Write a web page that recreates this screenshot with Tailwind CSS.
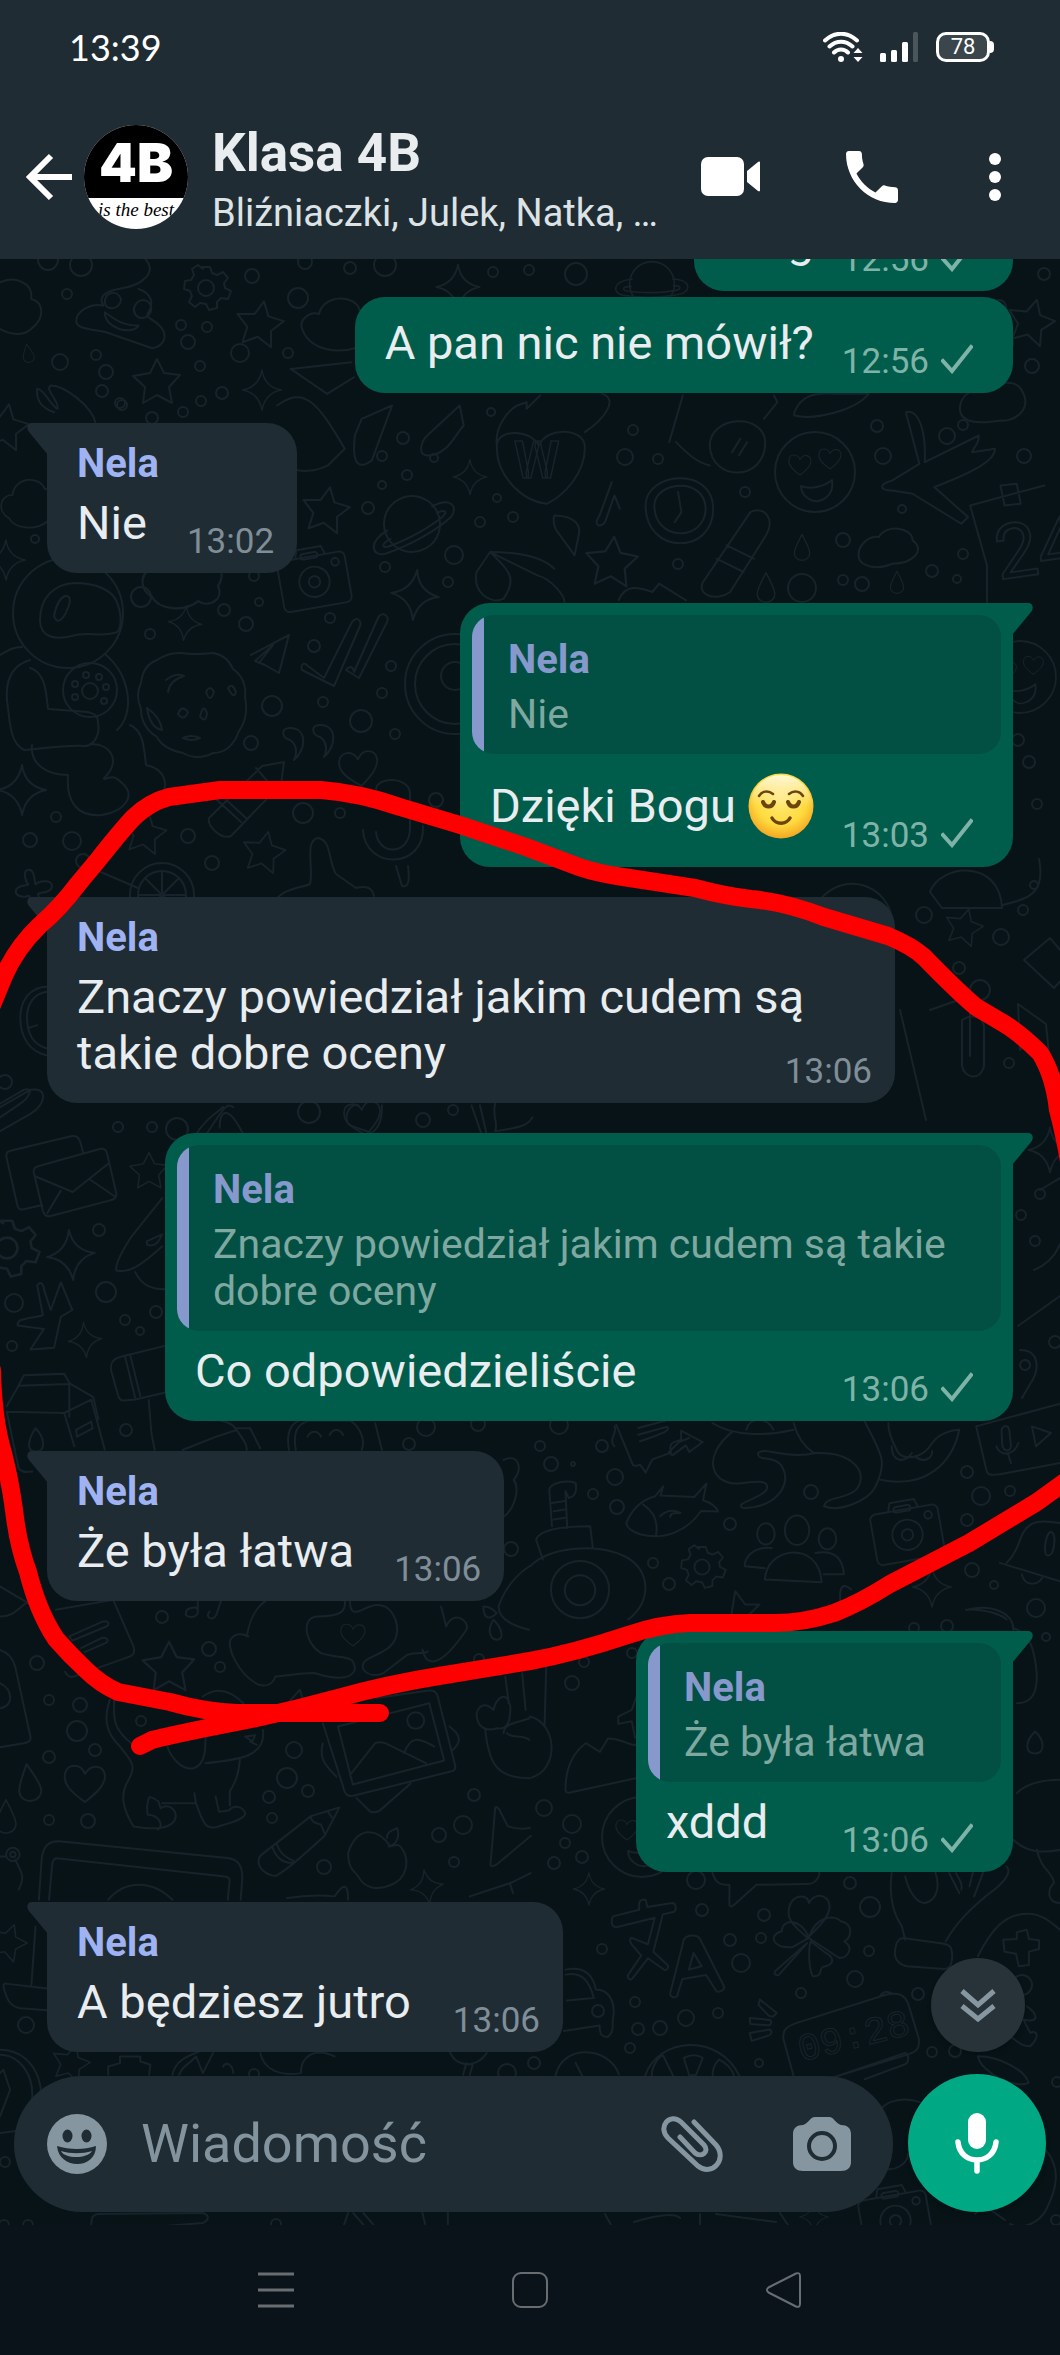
<!DOCTYPE html>
<html lang="pl">
<head>
<meta charset="utf-8">
<meta name="viewport" content="width=device-width, initial-scale=1">
<title>Klasa 4B</title>
<script src="https://cdn.jsdelivr.net/npm/@tailwindcss/browser@4"></script>
</head>
<body class="bg-[#0a131a] font-[Roboto,sans-serif] text-[#e9edef]">
<svg class="hidden" aria-hidden="true">
  <defs>
    <symbol id="check" viewBox="0 0 32 30"><path d="M2 17l9 10L30 3" fill="none" stroke="#80b3a8" stroke-width="4" stroke-linecap="square"/></symbol>
    <symbol id="tail-in" viewBox="0 0 21 32"><path d="M21 0H5C0 0-1 5 2 9l19 23z" fill="#1f2c34"/></symbol>
    <symbol id="tail-out" viewBox="0 0 21 32"><path d="M0 0h16c5 0 6 5 3 9L0 32z" fill="#005d4b"/></symbol>
  </defs>
</svg>
<div class="flex min-h-screen flex-col">
  <header class="relative z-10 bg-[#1f2c34]">
    <div class="flex h-[94px] items-center justify-between pl-[69px] pr-[66px]">
      <time class="font-[Lato,sans-serif] text-[36px] leading-10 text-white">13:39</time>
      <div class="flex items-center gap-[17px]">
        <svg class="h-[30px] w-[40px]" viewBox="0 0 40 30" fill="none" stroke="#fff" stroke-width="4" stroke-linecap="round">
          <path d="M2 8.500C12-.5 24-.5 34 8.500M6.500 14.500c7-6.500 16-6.500 23 0M11 20.500c4-4 10-4 14 0"/>
          <circle cx="18" cy="27" r="3" fill="#fff" stroke="none"/>
          <path d="M35 16l4.500 5h-9zM35 30l4.500-5h-9z" fill="#fff" stroke="none"/>
        </svg>
        <svg class="h-[30px] w-[39px]" viewBox="0 0 39 30" fill="#fff">
          <rect y="21" width="6" height="9" rx="1.500"/><rect x="11" y="18" width="6" height="12" rx="1.500"/><rect x="22" y="10" width="6" height="20" rx="1.500"/><rect x="33" width="5" height="30" rx="1.500" opacity=".2"/>
        </svg>
        <div class="flex items-center">
          <span class="flex h-[30px] w-[54px] items-center justify-center rounded-[10px] border-3 border-white bg-[#3a454c] text-[22px] leading-6 text-white">78</span>
          <span class="h-3 w-1 rounded-r bg-white"></span>
        </div>
      </div>
    </div>
    <div class="flex h-[165px] items-center pl-[24px] pr-[46px]">
      <button class="mr-[10px]" aria-label="Wstecz">
        <svg class="h-[50px] w-[50px]" viewBox="0 0 50 50" fill="none" stroke="#fff" stroke-width="6"><path d="M48 25H7M27 4L6 25l21 21"/></svg>
      </button>
      <div class="flex size-[104px] shrink-0 flex-col items-center overflow-hidden rounded-full bg-white text-center">
        <div class="h-[73px] w-full shrink-0 bg-black pt-[10px] font-[Inter,sans-serif] text-[54px] leading-[56px] font-black text-white">4B</div>
        <div class="font-[Liberation_Serif,serif] text-[19px] leading-6 whitespace-nowrap text-black italic">is the best</div>
      </div>
      <div class="ml-[24px] w-[450px] min-w-0 pt-2">
        <h1 class="truncate text-[53px] leading-[64px] font-bold">Klasa 4B</h1>
        <p class="truncate text-[38px] leading-[56px] text-[#dde2e5]">Bliźniaczki, Julek, Natka, …</p>
      </div>
      <div class="ml-auto flex items-center">
        <button class="mr-[86px]" aria-label="Połączenie wideo">
          <svg class="h-[40px] w-[59px]" viewBox="0 0 59 40" fill="#fff"><rect width="43" height="39" rx="7"/><path d="M59 5.500v28c0 1-1 1-2 .5L46 25V14L57 5c1-1 2-.5 2 .5z"/></svg>
        </button>
        <button class="mr-[90px]" aria-label="Połączenie głosowe">
          <svg class="size-[52px]" viewBox="3 3 18 18" fill="#fff"><path d="M6.620 10.790c1.440 2.830 3.760 5.140 6.590 6.590l2.200-2.200c.27-.27.67-.36 1.020-.24 1.120.37 2.330.57 3.570.57.55 0 1 .45 1 1V20c0 .55-.45 1-1 1-9.390 0-17-7.610-17-17 0-.55.45-1 1-1h3.500c.55 0 1 .45 1 1 0 1.250.2 2.450.57 3.570.11.35.03.74-.25 1.020z"/></svg>
        </button>
        <button class="mr-[12px]" aria-label="Menu">
          <svg class="h-[50px] w-[14px]" viewBox="0 0 14 50" fill="#fff"><circle cx="7" cy="7" r="6"/><circle cx="7" cy="25" r="6"/><circle cx="7" cy="43" r="6"/></svg>
        </button>
      </div>
    </div>
  </header>

  <main class="relative flex flex-1 flex-col overflow-hidden bg-[#081317]">
    <!-- Doodle wallpaper -->
    <svg class="absolute inset-0 h-full w-full" viewBox="0 259 1060 1966" preserveAspectRatio="xMidYMin slice" fill="none" stroke="#17232a" stroke-width="2" stroke-linejoin="round" stroke-linecap="round" aria-hidden="true">
      <defs>
        <path id="star" d="M0-23l7 14 16 2-11 12 3 16L0 13l-14 8 2-16-12-11 17-3z"/>
        <path id="spark" d="M0-25Q3-4 24 0 4 4 0 25-4 4-24 0-4-4 0-25z"/>
        <path id="heart" d="M0 20C-14 10-22 2-20-8-18-19-4-19 0-8 6-19 19-17 20-6 20 4 10 12 0 20z"/>
        <path id="drop" d="M0-18C6-6 11 2 11 9a11 10 0 0 1-22 0C-11 2-6-6 0-18z"/>
        <g id="planet"><circle r="28"/><path d="M-25-6C-50-4-50 12-36 14-10 18 20 17 38 12 50 6 46-6 26-6M-26 3C-38 3-38 8-30 9-10 12 15 11 30 8 38 6 36 2 27 2"/></g>
        <g id="gear"><circle r="8"/><path d="M-4-21h8l2 6 5 2 6-3 5 6-4 5 1 5 6 3-3 8-7-1-4 4 0 6-8 2-3-6-6-1-5 4-6-5 3-6-2-5-6-2 1-8 6-1 3-5-2-6 6-4 5 4z"/></g>
        <g id="cam"><rect x="-36" y="-24" width="72" height="54" rx="6"/><path d="M-16-24l3-9h26l3 9"/><circle cy="3" r="16"/><circle cy="3" r="6"/><circle cx="25" cy="-14" r="4"/><rect x="-10" y="-28" width="18" height="6" rx="3"/></g>
        <g id="love"><circle r="40"/><use href="#heart" transform="translate(-15 -8) scale(.55)"/><use href="#heart" transform="translate(15 -14) scale(.55)"/><path d="M-14 14C-4 18 10 14 17 8 20 24 4 34-6 27-11 24-14 20-14 14z"/></g>
        <path id="cloud" d="M-30 18C-44 10-40-8-26-8-24-28 4-30 10-14 26-22 40-6 30 8 36 22 20 28 12 22 0 32-24 30-30 18z"/>
      </defs>
      <g id="bubbles"></g>
      <g id="repeats"></g>
      <!-- upper left: space and cookie -->
      <g>
        <circle cx="68" cy="613" r="55"/><path d="M40 620c0-22 14-36 34-37 20 0 40 6 44 22 4 12 4 28-4 28-14 4-28-2-42 3-16 4-32 2-32-16zM54 616c2-10 6-18 11-20 6-1 6 6 2 14-3 8-10 16-13 6z"/>
        <path d="M30 660c-20 6-26 24-22 48 2 20 4 36 16 42 12 0 40-6 62-4 10-2 14-14 12-22 0-10-4-10-10-12l-40-3c-2-16-2-36-18-41M0 655c10-6 14-8 22-8M105 654c26 22 30 60 12 76M32 745c-2 20 16 30 36 30M68 775c-2 28 10 42 34 40 24-4 34-20 20-32-8-8-10-6-18-4M104 778c16-14 10-34-14-34M130 725c14 6 14 24 16 40 20 4 22 20 16 30"/>
        <circle cx="90" cy="690" r="27"/><circle cx="90" cy="691" r="8"/><circle cx="86" cy="675" r="3"/><circle cx="99" cy="677" r="3"/><circle cx="106" cy="687" r="3"/><circle cx="104" cy="701" r="3"/><circle cx="75" cy="697" r="3"/><circle cx="75" cy="684" r="3"/>
        <path d="M157 660q12-8 24-7 14 2 32 0 14 2 20 16 14 10 12 28 4 20-6 34-8 22-26 22-16 8-30 0-20-4-26-16-16-10-16-28-6-14 0-26 2-18 16-23zM166 680q10-8 18-4-14 4-16 16M206 692q4-8 8 0-4 12-8 0zM178 714q4-10 10-2-4 10-10 2zM200 716q4-14 7-2-2 10-7 2zM228 688q4-6 8 4-2 8-8-4zM147 708q14 10 15 22-12-2-15-22zM183 738q8-4 17 0-8 4-17 0z"/>
        <path d="M251 655l38-20-10 38-14-8-10-4 18-16-14 18M302 670c-2-6 2-8 6-4l16 12 28-56c4-6 10-2 8 4l-26 60zM346 670c4-6 8-2 8 2l24-54c4-8 12-2 9 4l-28 56z"/>
        <path d="M290 740c-8-2-10-12 0-12 18 0 16 22 4 32 4-8 2-16-4-20zM320 737c-8-2-10-12 0-12 18 0 16 22 4 32 4-8 2-16-4-20zM209 818c-2 8 12 22 22 18l50-52 3-22-22 4zM256 768l14 16M217 800l24 22M222 796l24 22"/>
        <circle cx="455" cy="684" r="50"/><circle cx="455" cy="684" r="40"/><circle cx="455" cy="676" r="14"/>
        <path d="M276 900c8-12 26-12 34-16 4-14-6-44 8-46 14 2 10 24 18 36l20 14c8-2 16-2 18 8M363 830c2 40 62 40 60-4M376 832c2 24 34 24 34-4M376 790c0-14 34-14 34 4v36M396 866l6 20c6 2 8-4 6-20"/>
        <circle cx="162" cy="895" r="32"/><circle cx="162" cy="895" r="24"/><path d="M162 871v48M138 895h48M145 878l34 34M179 878l-34 34M96 870l42 18"/>
        <path d="M28 870c8-2 6 16 8 14s16-6 16 2-14 6-14 8 6 14-2 14-4-14-8-12-14 0-12-6 14-4 12-6-6-14 0-14z"/>
      </g>
      <!-- top strip -->
      <g transform="translate(0 259) scale(.676 .333)">
        <path vector-effect="non-scaling-stroke" d="M215 0c18 40-4 80-40 90-20 8-30 24-22 50-20-10-42 20-40 50 2 20 20 20 44 30l68 48c20-6 24-44 10-70-10-20-20-20-16-36 10-30 4-60-14-72M155 130c0-30 18-40 24-10 0 30-22 40-24 10zM198 150c4-36 24-36 26 0-2 36-26 36-26 0zM155 160c20 30 30 40 50 40-10 30-50 10-50-40zM0 70c20-20 50 0 46 50 20 10 20 60 0 90-10 20-30 20-46 0M530 265c-30 20-70 10-82-50-8-30 10-60 24-50 6-60 56-60 60-10M55 390c10 0 20 50 30 60 4-20-20-60-10-70 20 0 60 60 66 110M55 390c-2 40 10 60 25 70M430 330l90-20M430 330l54 75 40-50M410 440c40-60 60-10 100 130l-25 50c-20 20-40 20-50 10M525 530l10-50 45-40-30 165c-20 30-30 10-25-75zM680 440l-48 90c-10 20-14 60 0 60 30 0 40-60 54-90z"/>
        <path vector-effect="non-scaling-stroke" d="M735 560c0-50 50-50 62 0 14-60 66-50 68 0 2 80-30 150-56 175-40-10-76-90-74-175zM735 560c-4-60 20-110 30-120l14-10 0 20 20-40M865 520c30-40 50-100 26-115M955 740c0-100 100-120 100 10 0 140-100 140-100-10zM968 740c0-70 74-90 76 10-2 100-76 100-76-10zM1003 700l5 60-10 30M1050 560c0-90 80-100 82-10 0 120-80 120-82 10zM990 550l20-140M1000 550c20 40 30 60 50 70M1130 480l20-50-5-20M1175 460c10-50 30-60 60-55l50 0c-20 50-80 80-110 65zM1340 460c20-10 30 60 28 150l50-50 30-30c0 30-10 40-10 50l34-10c0 30-20 60-90 115l50 90-10 20-72-90-30-10c-20 0-20-20 0-30l40-50zM1420 450c0-40 20-70 40-50 10-30 40-40 50-10 20 60-10 100-30 95-30 10-60 10-60-35zM1270 890c0-40 20-60 30-55 10-40 50-30 50 10 20 30 0 70-30 70-20 20-50 10-50-25zM820 770c30 0 40 30 36 60l-6 60-25-70c-8-20-6-50-5-50zM1040 970l70-210c20-20 40 20 20 80l-50 160c-20 30-50 10-40-30zM1060 900l40 40M1075 860l40 40M705 940l20-60c50 0 80 20 95 50M705 940c-6 60 20 100 40 80 20-60 10-80-20-140l70 70c20 10 40 60 40 80M915 1025c10-50 30-40 50-25l10-25 40 50M1435 740l110-60M1435 740l25 180 0 110M1480 680l24-5 6 60-24 5zM905 670l-18 100c-10 30 0 40 8 20l14-80 8 40M1095 540l-12 40M1105 550l-12 40"/>
      </g>
      <text x="514" y="478" font-size="52" font-weight="700" stroke-width="1.500">W</text>
      <text x="996" y="578" font-size="76" transform="rotate(-8 1010 560)">24</text>
      <!-- right margin -->
      <g>
        <path d="M930 892c10-28 70-34 72 16l-60 0zM1003 905c18-6 44-6 36-46M820 900a40 40 0 0 1 72 20M1024 960l26-22 24 28-20 22zM930 1010l40-14v60M962 1020c10-6 20-4 22 6v40c-4 16-20 12-22 0zM1018 1004l2 46 14-14 16 28-4-40zM900 1010l26 110M1040 1190l20-12M1034 1270c20-8 24-22 26-26M1018 1326l42-30M1020 1350c20 0 20 20 10 34l-8 14M1025 1360a5 5 0 1 0 .1 0"/>
        <circle cx="1034" cy="885" r="4"/>
      </g>
      <!-- left column -->
      <g transform="translate(0 880) scale(.338 .344)">
        <path vector-effect="non-scaling-stroke" d="M0 690l60-40c30-20 40-50 10-40L0 650M0 730l90-50c50-30 50-80 0-70L0 660M60 400c0-50 30-90 80-90M80 400c0-40 20-70 60-75M60 400c0 60 30 100 80 110M80 400c0 50 20 80 60 90M85 430l25-8M20 810c-4-20 0-20 20-25l170-40c16-4 24 4 28 18l8 30M20 810l30 130c4 20 10 20 30 15l45-10M100 850c-2-12 4-16 20-20l175-48c14-4 20 4 22 14l26 110c4 14 0 22-20 26l-170 44c-14 4-22 0-26-14zM105 862l110 45 105-82M140 968l40-65M265 870l75 50M480 925l-90 110c-20 30-50 80-46 100 40 10 80-20 136-70M435 1050l45-20c-10 20-20 40-45 30zM400 1140c20 40 50 50 90 50M110 1180c10-20 20 0 20 10l20 60 30-80 34 80-34 20 -20 90-70 5 40-60-78-10c0-20 10-15 75-30zM330 1430c-8-30 10-40 30-45l125-30M330 1430l20 70c6 20 20 12 50 10l90-20M370 1385l30 120M385 1380l30 120M55 1470l15-30 120-5 16 28 70 40 15 65M55 1470l150-5M55 1470l-35 60M205 1465l0 95"/>
        <path vector-effect="non-scaling-stroke" d="M580 740c30-50 60-60 80-80M610 740c60-90 60-90 80-80M650 720c0-60 30-60 70 20M1060 655c-30-10-50 50-20 60l60 20c30-20 30-60 30-80M1395 655l30 85M1420 655l20 85M1465 650c-10 40 10 50 0 80 80-10 100-20 110-40"/>
      </g>
      <!-- lower left -->
      <g transform="translate(0 1400) scale(.338 .333)">
        <path vector-effect="non-scaling-stroke" d="M20 35l35 170c6 12 20 12 40 10M20 35l170 4 30 100M190 39l80-40 40 150M105 85c-20 30-30 70 0 70s30-40 0-70zM225 90l45-25 4 20-46 25zM440 0l8 100 10 50M540 150l100-40 60-20c20 30 30 40 30 60M700 90c-10-20-40-30-70-30M700 85l40 0 30 60M855 150c-10-60 10-80 30-88M875 150c-10-60 10-80 40-88h120c20 10 50 50 35 88M910 110c10-20 30-20 40 0M975 105c10-20 30-20 40 0M1110 70l20 80M1490 180c40-20 60 20 30 60 20 30 0 90-30 110M100 620l-100-60M0 650c40 0 50-20 100-60M165 630l170-30 60 140c4 20 0 25-10 30l-165 60c-10 4-20 0-28-14M205 710l100-45c16-4 22 10 8 16l-100 42zM240 745l60-30c16-4 26 10 10 16l-60 26M550 640c0-20 40-20 35-10M585 600l0 40c-10 20-40 10-35 0M655 600l-15 45c-10 20-35 10-20-10M730 710c10-60 30-90 60-110M1020 600c4 30-4 50-80 50-50 0-40 80 10 110 60 20 100 0 100 50-10 30-60 30-120 10-60 0-80 10-115 10-10 30-30 30-50 25-60-30-100-120-80-140 20-20 40-10 50-5M1035 600c0 60 30 30 60 20 60-20 80 40 80 70 0 60-60 70-90 90-30 20 0 60 50 40l70-55c30-10 50 0 60-10M1250 750c10 50 50 60 130-60 10-30-40-60-60-10l-15-60M1475 620c20-60 60-100 90-120M1475 620c0 40 50 60 90 70M1430 620c20 0 30 10 40 20-20 20-40 20-40-20zM1460 660c-20 30-10 60 10 60s20-30-10-60z"/>
      </g>
      <g transform="translate(0 1600) scale(.338 .333)">
        <path vector-effect="non-scaling-stroke" d="M0 150c30 10 40 30 45 50l45 210c2 14-4 16-20 20l-70 12M0 250c40 20 40 70 0 75M325 300c-20 60-10 100 30 140 40 50 50 60 20 110-20 40-10 80 20 130 60 10 120 10 125-30 0-20-20-40-45-25l-6-20c-30-20-30-20-34 20l2 20c30 0 50 30 30 45M338 300c-4 60 0 90 50 130M480 610l100 0-5-30M580 610c20 60 30 80 60 72 30-10 80-20 86-40-6-20-30-30-50-10l-28 4-10-46M710 475c-4 60-20 80-30 100l0 42M600 290c40-30 80-20 120 20M495 440c10 30 40 70 75 66 50-10 35-100 38-120M608 490c100-10 180-20 170-100M725 410l30-4-8 18zM740 425l20 10M847 315l40-45 10 30M955 370l60 190c6 26 14 30 30 28l285-72c18-4 20-10 14-30l-50-200c-6-16-20-16-40-12l-140 20M1000 380l270-70 44 172-270 72zM1040 520l70-90c10-4 20-4 30 0l120 60M1195 460c20-50 40-50 90-20M955 430c-10 40 0 60 40 100M1330 380c40 30 30 50 10 70M1055 595l40 40c10 4 20 4 30-4l90-80M765 785c0 20 20 40 50 44 40-20 100-80 145-120l44-86-84 26-145 115c-8 6-10 12-10 21zM920 650c0 20 20 20 30 25l10 25M805 740c10 30 30 50 60 50M820 735c10 30 30 40 50 50M970 635l12 18M1155 740c-40-60-100-60-125 20 0 50 20 55 30 70 20 40 60 40 90 28 60-20 60-80 40-110-10-20-20-10-35-8zM1145 715c0-20 10-20 30-30 10 30-5 50-25 55M1465 625c0-6 6-4 12 4l25 50c20 8 40 10 66 6M1465 625l-14 170c2 8 10 4 20-2l100-85M1410 340c10-30 30-30 50-10 10-40 40-60 50-10 0 50-10 70-40 65-30 10-60 0-60-45zM1435 385c10 100 30 150 130 150M1490 400c0-30 40-30 76-45M1500 400c20 20 40 0 66 20M1495 230l10 80M1545 220l10 110M115 900l8-120c4-40 20-60 60-55l490 50c30 4 44 20 44 60l-5 65M145 900l10-110c2-10 8-16 20-14l490 54c12 2 16 6 14 16l-5 54M320 900c50-60 130-60 190 0M0 770l16 0M45 780c20 40 30 50 10 90M850 895c60-10 100-10 140-5 20-30 40-50 40 10M1390 890l120-40 60-30M1508 850l10 30"/>
        <circle vector-effect="non-scaling-stroke" cx="1230" cy="362" r="25"/><circle vector-effect="non-scaling-stroke" cx="38" cy="764" r="20"/><circle vector-effect="non-scaling-stroke" cx="38" cy="764" r="8"/>
      </g>
      <g transform="translate(0 1860) scale(.338 .333)">
        <path vector-effect="non-scaling-stroke" d="M105 200l-12 175M10 380c0-10 4-10 14-8l115 14M10 380c10 40 20 60 50 65l80 6M0 570c120 0 160 160 80 240l-80 10M0 585c90 0 130 140 60 200M0 640l10-10 20 60-30 80M320 645v-25l35-10v-20l60 0 0 15 30 10-4 30M510 645c10-50 60-60 80-70M530 645c10-30 30-30 50-55l20 50 30-60M660 620c10-20 30 0 30 20M770 580c10 50 60 70 120 60 0-50 40-80 100-50M1330 575c20 50 80 50 110 5M1380 610l-10 35M1400 610l-10 35M270 1095c0-20 4-30 20-32l310-3c20 6 20 20 0 30l-180 15M1030 1060l-12 35M1045 1060l30 35M1075 1060l30 35M1250 1060l8 35M1325 1060v35"/>
      </g>
      <!-- right: animals, people, gadgets -->
      <g transform="translate(530 1120) scale(.338 .333)">
        <path vector-effect="non-scaling-stroke" d="M255 915l45 110c4 16 12 16 26 10l16 24 20-40 55-20c-10-40 20-30 30-40l0-26 64 34-40 30-10-20-40 30-10-10 30-30 30-12M320 925l80-22M320 945l85-24c10 10 0 16-80 44M540 910c60 40 160 40 240 20M600 935c-100 80-60 170 30 155 40-5 80-10 70 20-20 30-100 40-70 55 100 0 140-70 120-115-20-50-80-20-75-50 20-20 80 20 170 0 110-5 160 60 120 110-30 30-90 20-95 50 50 20 130-20 150-55 40-80 20-100-30-200M780 910c10 40 30 70 60 90M1060 910c0 40 20 70 30 90 20 20 70 20 100-30 20-30 60-40 80-40-20 100-100 180-235 150M1320 920l30 130c4 20 16 16 40 14l178-34M1320 920l248-68M1395 930c10-20 24-10 24 10l4 40c-4 20-24 14-26-6zM1380 980c10 30 50 30 65-10M1415 1005l8 25M1485 920l56 20-44 40zM285 1210c20-50 50-70 85-80l24-30-8 28 100 4 36-40-10 50c30 10 40 20 44 34l-50-2c-40 60-110 90-180 70-30-10-40-20-41-34zM335 1155c30 20 45 50 38 90M385 1190c20-20 40-20 60-10-20 0-30 0-30 12M65 1220l-8-110c4-20 50-30 78-20 4 20 0 40-20 45l-10-20 5 110M65 1150l38-6M70 1175l38-6M70 1200l38-6M18 1260c10-30 80-40 160-40l8 65M18 1260l20 60M0 1340c60-60 200-70 280-30 80 40 80 140 10 190M635 1340c0-30 30-60 80-55M635 1340l60 6M695 1380c4-100 160-120 168 8zM845 1300c60-10 80 20 84 64l-60 0M595 1490l12-75 30 40 42 0-40 40M920 1460c-6-40-4-80 30-50M1410 1330c20-20 30-40 40-70 20-60 60-60 118-50M1390 1330l178 55M1455 1365c10 40 50 30 60 10M1525 1270c10-60 40-30 20 30-20 20-24 0-20-30zM250 980c-20-20 10-40 0-60M1300 1470c60 0 100 20 110 30M640 930c10-40 60-40 80 0M1070 980c0 50 40 50 60 20M1140 1010c20 20 50 10 50-15"/>
        <circle vector-effect="non-scaling-stroke" cx="148" cy="1410" r="86"/><circle vector-effect="non-scaling-stroke" cx="148" cy="1412" r="45"/><ellipse vector-effect="non-scaling-stroke" cx="790" cy="1232" rx="36" ry="44"/><ellipse vector-effect="non-scaling-stroke" cx="698" cy="1243" rx="26" ry="32"/><ellipse vector-effect="non-scaling-stroke" cx="880" cy="1258" rx="26" ry="32"/>
      </g>
      <g transform="translate(530 1600) scale(.338 .333)">
        <path vector-effect="non-scaling-stroke" d="M48 200l-5 180M0 350c80 20 90 160 0 185M105 570c0-60 20-110 60-140l42 26 24-40c40 0 60 20 84 20M105 570c0 8 6 10 14 8l200-44M315 290l-14 40-40 20 0 22 40-8 10 50M540 820c10 30 20 36 50 36v60c4 8 10 4 20-6l60-55 150-2c20 0 36-16 36-35M1070 820c-10 80 10 130 30 160l10 40M1110 830c10 40 30 80 60 80 40-10 40-60 30-90M1240 820l30 60M1260 820c10 20 20 30 16 50M1310 820l-10 40M1410 800c20 20-20 60-50 80-60 50-100 90-130 145M1340 820l-26 70M1085 1030c10-20 20-14 40-12l100 14c20 4 24 14 24 40-2 30-10 36-24 36l-110-8c-40-10-40-40-30-70zM1325 1070c40-80 80-130 150-128 40 0 70 30 95 50M1400 1020l40-2 0-20 30-8 6 28 30 4 0 26-30 8 0 40-30 4-8-38-34-6zM1440 580c30-30 80-40 130-40M1430 720c40 40 90 40 140 30M1500 750c10 60 50 70 50 100-20 20-20 60 18 60M1290 30c80-20 140 10 140 60M1440 310c60 0 70-60 50-150-10-50-40-70-60-75M1494 395c-30 30-30 66 0 66s30-40 0-66zM765 940c0-60 60-60 60-30 20-40 70-20 60 20-6 30-40 60-64 85-20-20-56-45-56-75zM825 1015c-20-60-80-60-80-20-40 10-30 50 30 48zM825 1015c20-70 80-70 95-50 40 10 30 50 10 60 30 20 10 50-15 50zM830 1025c-10 40 0 110 10 105 30 0 10-30 35-30 30-10 20-30 0-40zM820 1030l-95 85c-4 10 4 14 12 10zM245 950c-8 20 0 36 14 32l110-28-20 80-50-20c-8 10 0 20 10 30l20 24-40 60c0 10 8 16 14 8l46-60 50 36c8 0 12-10 8-16l-42-40 28-112 34-8c8-8 4-26-6-26l-74 12-4-20c-8-6-20 0-20 10l0 18zM415 1180l40-160c10-16 40-16 48-2l72 144c0 10-16 18-24 12l-30-48-70 12-16 52c-10 8-22 0-20-10zM470 1110l14-50 24 40zM105 1110c50-10 80 10 90 60 40 0 60 40 50 90 0 30 0 40-15 52-20 0-24-10-24-34l-106 16M105 1125c50-10 70 20 84 70l-80 8M75 1430c20-100 160-90 188-5M135 1390l20 40M340 1430c40-120 220-130 280 0M360 1430c0-30 20-60 34-62l30 62M455 1375c20-10 40-10 56 0l-20 52-20 0zM540 1430c0-30 10-40 20-50 20 10 40 30 44 50M680 1200l50 40c-8 10-12 14-24 8l-30-32zM650 1255l60 6c6 8 4 16-4 16l-54-4zM650 1300l60-10c8 6 4 16-4 18l-50 16zM780 1430l-30-110c-4-30 10-40 40-50l260-84c40-10 60 0 70 30l30 100c4 30-4 40-36 50l-230 72M880 1440l230-80c16 10 8 30 0 34l-120 45M1035 1190c10-16 20-16 36-8M1325 1370c60 0 140 40 150 80-40 20-140-30-150-80zM1470 1220c40 30 30 50-10 40l20 40c20-10 30 10 0 40-20 0-20 0-60-30"/>
      </g>
      <text x="797" y="2049" font-family="Liberation Mono" font-size="38" stroke-width="1" transform="rotate(-14 850 2038)">09:28</text>
      <path d="M880 2110c10-14 40-14 50 0M884 2168c10 4 24-4 24-14M1046 2150c16 20 10 40 0 60-8 14-24 20-36 14M634 2222c20-6 40-10 46-4M716 2214l60 8M700 2214v11M605 2214l6 11M780 2213l8 12M975 2214l10-8 20 14"/>
    </svg>

    <section class="relative z-10 -mt-16 flex flex-1 flex-col items-start px-[47px]" aria-label="Wiadomości">
      <article class="flex min-h-24 items-end self-end rounded-[30px] bg-[#005d4b] pt-[18px] pb-[11px] pl-5 pr-[40px]">
        <p class="mr-7 mb-[11px] text-[47px] leading-14">Omg</p>
        <time class="text-[35px] leading-10 text-[#80b3a8]">12:56</time>
        <svg class="ml-3 mb-2 h-[30px] w-[32px]"><use href="#check"/></svg>
      </article>

      <article class="mt-[6px] flex items-end self-end rounded-[30px] bg-[#005d4b] pt-[18px] pb-[11px] pl-[30px] pr-[40px]">
        <p class="mr-7 mb-[11px] text-[47px] leading-14">A pan nic nie mówił?</p>
        <time class="text-[35px] leading-10 text-[#80b3a8]">12:56</time>
        <svg class="ml-3 mb-2 h-[30px] w-[32px]"><use href="#check"/></svg>
      </article>

      <article class="relative mt-[30px] rounded-[30px] rounded-tl-none bg-[#1f2c34] pt-[17px] pb-[11px] pl-[30px] pr-[23px]">
        <svg class="absolute top-0 -left-5 h-8 w-[21px]"><use href="#tail-in"/></svg>
        <h2 class="text-[40px] leading-[47px] font-bold text-[#9fb3f3]">Nela</h2>
        <div class="mt-2 flex items-end justify-between">
          <p class="mr-10 mb-[11px] text-[47px] leading-14">Nie</p>
          <time class="text-[35px] leading-10 text-[#7f8e97]">13:02</time>
        </div>
      </article>

      <article class="relative mt-[30px] self-end rounded-[30px] rounded-tr-none bg-[#005d4b] p-3 pb-[11px]">
        <svg class="absolute top-0 -right-5 h-8 w-[21px]"><use href="#tail-out"/></svg>
        <blockquote class="flex overflow-hidden rounded-[22px] bg-[#025043]">
          <span class="w-3 shrink-0 bg-[#8799cc]"></span>
          <div class="pt-[21px] pr-10 pb-4 pl-6">
            <h2 class="text-[40px] leading-[47px] font-bold text-[#8799cc]">Nela</h2>
            <p class="mt-2 text-[41px] leading-[47px] text-[#7fa8a0]">Nie</p>
          </div>
        </blockquote>
        <div class="mt-[13px] flex items-end justify-between pl-[18px] pr-7">
          <p class="mr-7 mb-[11px] flex h-[78px] items-center text-[47px] leading-14">Dzięki Bogu
            <svg class="ml-3 size-[66px]" viewBox="0 0 66 66" role="img" aria-label="😌">
              <defs><radialGradient id="face" cx=".5" cy=".4" r=".6"><stop offset="0" stop-color="#ffe97d"/><stop offset=".65" stop-color="#fedb3e"/><stop offset="1" stop-color="#f5a623"/></radialGradient><linearGradient id="shine" x2="0" y2="1"><stop offset="0" stop-color="#fff7d6"/><stop offset=".5" stop-color="#fff7d6" stop-opacity="0"/></linearGradient></defs>
              <circle cx="33" cy="33" r="32.500" fill="url(#face)"/><circle cx="33" cy="33" r="31" fill="url(#shine)"/>
              <g fill="none" stroke="#6b4410" stroke-linecap="round"><path d="M11 23c3-5 9-6 14-2M41 21c5-4 11-3 14 2" stroke-width="2.500"/><path d="M15 29c2 6 9 6 11 0M40 29c2 6 9 6 11 0" stroke-width="4"/><path d="M24 45c4 7 14 7 18 0" stroke-width="3.500"/></g>
            </svg>
          </p>
          <div class="flex items-end">
            <time class="text-[35px] leading-10 text-[#80b3a8]">13:03</time>
            <svg class="ml-3 mb-2 h-[30px] w-[32px]"><use href="#check"/></svg>
          </div>
        </div>
      </article>

      <article class="relative mt-[30px] max-w-[848px] rounded-[30px] rounded-tl-none bg-[#1f2c34] pt-[17px] pb-[11px] pl-[30px] pr-[23px]">
        <svg class="absolute top-0 -left-5 h-8 w-[21px]"><use href="#tail-in"/></svg>
        <h2 class="text-[40px] leading-[47px] font-bold text-[#9fb3f3]">Nela</h2>
        <p class="mt-2 flow-root text-[47px] leading-14">Znaczy powiedział jakim cudem są takie dobre oceny<time class="float-right mt-[27px] text-[35px] leading-10 text-[#7f8e97]">13:06</time></p>
      </article>

      <article class="relative mt-[30px] max-w-[848px] self-end rounded-[30px] rounded-tr-none bg-[#005d4b] p-3 pb-[11px]">
        <svg class="absolute top-0 -right-5 h-8 w-[21px]"><use href="#tail-out"/></svg>
        <blockquote class="flex overflow-hidden rounded-[22px] bg-[#025043]">
          <span class="w-3 shrink-0 bg-[#8799cc]"></span>
          <div class="pt-[21px] pr-10 pb-4 pl-6">
            <h2 class="text-[40px] leading-[47px] font-bold text-[#8799cc]">Nela</h2>
            <p class="mt-2 text-[41px] leading-[47px] text-[#7fa8a0]">Znaczy powiedział jakim cudem są takie dobre oceny</p>
          </div>
        </blockquote>
        <div class="mt-3 flex items-end justify-between pl-[18px] pr-7">
          <p class="mr-7 mb-[11px] text-[47px] leading-14">Co odpowiedzieliście</p>
          <div class="flex items-end">
            <time class="text-[35px] leading-10 text-[#80b3a8]">13:06</time>
            <svg class="ml-3 mb-2 h-[30px] w-[32px]"><use href="#check"/></svg>
          </div>
        </div>
      </article>

      <article class="relative mt-[30px] rounded-[30px] rounded-tl-none bg-[#1f2c34] pt-[17px] pb-[11px] pl-[30px] pr-[23px]">
        <svg class="absolute top-0 -left-5 h-8 w-[21px]"><use href="#tail-in"/></svg>
        <h2 class="text-[40px] leading-[47px] font-bold text-[#9fb3f3]">Nela</h2>
        <div class="mt-2 flex items-end justify-between">
          <p class="mr-10 mb-[11px] text-[47px] leading-14">Że była łatwa</p>
          <time class="text-[35px] leading-10 text-[#7f8e97]">13:06</time>
        </div>
      </article>

      <article class="relative mt-[30px] min-w-[377px] self-end rounded-[30px] rounded-tr-none bg-[#005d4b] p-3 pb-[11px]">
        <svg class="absolute top-0 -right-5 h-8 w-[21px]"><use href="#tail-out"/></svg>
        <blockquote class="flex overflow-hidden rounded-[22px] bg-[#025043]">
          <span class="w-3 shrink-0 bg-[#8799cc]"></span>
          <div class="pt-[21px] pr-10 pb-4 pl-6">
            <h2 class="text-[40px] leading-[47px] font-bold text-[#8799cc]">Nela</h2>
            <p class="mt-2 text-[41px] leading-[47px] text-[#7fa8a0]">Że była łatwa</p>
          </div>
        </blockquote>
        <div class="mt-3 flex items-end justify-between pl-[18px] pr-7">
          <p class="mr-7 mb-[11px] text-[47px] leading-14">xddd</p>
          <div class="flex items-end">
            <time class="text-[35px] leading-10 text-[#80b3a8]">13:06</time>
            <svg class="ml-3 mb-2 h-[30px] w-[32px]"><use href="#check"/></svg>
          </div>
        </div>
      </article>

      <article class="relative mt-[30px] rounded-[30px] rounded-tl-none bg-[#1f2c34] pt-[17px] pb-[11px] pl-[30px] pr-[23px]">
        <svg class="absolute top-0 -left-5 h-8 w-[21px]"><use href="#tail-in"/></svg>
        <h2 class="text-[40px] leading-[47px] font-bold text-[#9fb3f3]">Nela</h2>
        <div class="mt-2 flex items-end justify-between">
          <p class="mr-[42px] mb-[11px] text-[47px] leading-14">A będziesz jutro</p>
          <time class="text-[35px] leading-10 text-[#7f8e97]">13:06</time>
        </div>
      </article>

      <button class="absolute right-[35px] bottom-0 flex size-[94px] items-center justify-center rounded-full bg-[#283339] shadow-md" aria-label="Przewiń na dół">
        <svg class="h-[34px] w-[36px]" viewBox="0 0 36 34" fill="none" stroke="#8797a1" stroke-width="5"><path d="M2 3l16 14L34 3M2 18l16 13 16-13"/></svg>
      </button>
    </section>

    <form class="relative z-10 mt-[22px] mb-[13px] flex items-end gap-[15px] px-[14px]">
      <div class="flex h-[136px] min-w-0 flex-1 items-center rounded-full bg-[#1f2c34] pl-[33px] pr-[42px]">
        <button type="button" aria-label="Emoji">
          <svg class="size-[60px]" viewBox="0 0 60 60"><circle cx="30" cy="30" r="30" fill="#8696a0"/><ellipse cx="20.500" cy="22" rx="5" ry="6.500" fill="#1f2c34"/><ellipse cx="39.500" cy="22" rx="5" ry="6.500" fill="#1f2c34"/><path d="M10 32c13 4 27 4 39 0 0 24-37 24-39 0z" fill="#1f2c34"/><path d="M14 37c10 3 21 3 31 0-5 8-27 8-31 0z" fill="#8696a0"/></svg>
        </button>
        <input class="ml-[34px] min-w-0 flex-1 text-[54px] leading-[64px] outline-none placeholder:text-[#84949e]" type="text" placeholder="Wiadomość" aria-label="Wiadomość">
        <button type="button" class="mr-[70px]" aria-label="Załącz">
          <svg class="h-[56px] w-[62px]" viewBox="0 0 62 56" fill="none" stroke="#8696a0" stroke-width="5" stroke-linecap="round"><path d="M33 6l22 23c12 14-4 32-18 21L7 22C-4 11 9-4 20 6l23 23c6 7-3 13-9 8L19 21"/></svg>
        </button>
        <button type="button" aria-label="Aparat">
          <svg class="h-[56px] w-[58px]" viewBox="0 0 58 56"><path d="M22 1h14c5 0 7 7 12 8 6 0 10 3 10 9v28c0 6-4 9-10 9H10c-6 0-10-3-10-9V18c0-6 4-9 10-9 5-1 7-8 12-8z" fill="#8696a0"/><circle cx="29" cy="30" r="13" fill="none" stroke="#1f2c34" stroke-width="4"/></svg>
        </button>
      </div>
      <button type="button" class="flex size-[138px] shrink-0 items-center justify-center rounded-full bg-[#00a884] shadow-md" aria-label="Nagraj wiadomość głosową">
        <svg class="h-[62px] w-[44px]" viewBox="0 0 44 62"><rect x="13" y="1" width="18" height="36" rx="9" fill="#fff"/><path d="M3 30c2 24 36 24 38 0M22 48v11" fill="none" stroke="#fff" stroke-width="5.500" stroke-linecap="round"/></svg>
      </button>
    </form>

    <!-- Red marker drawn around the conversation -->
    <svg class="pointer-events-none absolute inset-0 z-20 h-full w-full" viewBox="0 259 1060 1966" preserveAspectRatio="xMidYMin slice" fill="none" stroke="#fe0000" stroke-width="18" stroke-linecap="round" stroke-linejoin="round" aria-hidden="true">
      <path d="M140 1746L152 1740Q180 1733 237 1722 287 1712 338 1698T439 1676Q487 1668 530 1661 574 1653 628 1635 660 1624 690 1623H770Q800 1624 834 1613 860 1603 890 1584L969 1543 1037 1502 1070 1478"/>
      <path d="M1072 1180Q1066 1140 1058 1110 1054 1075 1040 1053 1020 1033 1003 1023L976 1007Q956 990 924 957 912 946 888 936L824 917Q785 902 751 899 725 896 695 888L623 877Q596 873 579 867L526 847 460 825 400 807Q360 793 321 790H220L169 797Q150 802 134 817 120 832 98 860L78 884Q60 908 40 925 16 948 4 976L-10 1010"/>
      <path d="M-8 1370Q-7 1420 3 1453 10 1480 14 1510 18 1545 28 1572 38 1612 56 1639 70 1655 85 1669 100 1684 118 1692L170 1702Q205 1712 237 1713H380"/>
    </svg>
  </main>

  <nav class="grid h-[130px] grid-cols-3 items-center justify-items-center bg-[#0a131a] px-[14%]" aria-label="System">
    <button aria-label="Ostatnie aplikacje"><svg class="size-9" viewBox="0 0 36 36" stroke="#686d71" stroke-width="3"><path d="M0 2h36M0 18h36M0 34h36"/></svg></button>
    <button aria-label="Ekran główny"><svg class="size-9" viewBox="0 0 36 36" fill="none" stroke="#686d71" stroke-width="2"><rect x="1" y="1" width="34" height="34" rx="8"/></svg></button>
    <button aria-label="Cofnij"><svg class="size-9" viewBox="0 0 36 36" fill="none" stroke="#686d71" stroke-width="2" stroke-linejoin="round"><path d="M30 1.500L2.500 15.500c-2 1.500-2 3.500 0 5L30 34.500c3 1 4 0 4-3V4.500c0-3-1-4-4-3z"/></svg></button>
  </nav>
</div>
<script>
  const NS = 'http://www.w3.org/2000/svg';
  // Small circles scattered between the doodles: x, y, radius
  const dots = [[48,260,10],[81,265,11],[252,276,7],[305,262,7],[350,268,6],[385,265,11],[493,272,5],[529,270,5],[576,274,11],[67,294,5],[298,298,10],[181,325,5],[207,327,5],[188,342,7],[240,353,9],[288,353,5],[60,362,8],[106,372,7],[96,355,5],[200,366,5],[102,391,6],[122,405,5],[201,401,5],[222,393,6],[183,412,5],[152,418,6],[1044,274,6],[1032,366,7],[999,307,7],[1006,343,7],[403,438,6],[382,456,5],[434,458,4],[407,475,5],[382,485,4],[491,412,4],[633,430,5],[625,457,8],[658,459,5],[368,508,6],[480,522,5],[513,517,5],[497,498,4],[454,555,9],[385,567,5],[448,582,5],[678,564,5],[745,492,5],[877,426,6],[947,436,8],[883,456,8],[902,509,4],[843,540,7],[932,571,6],[957,579,4],[963,554,5],[1024,456,7],[843,580,5],[862,584,7],[802,588,14],[963,425,5],[141,597,10],[224,610,6],[246,624,7],[254,576,5],[330,618,5],[150,634,5],[259,602,4],[314,646,6],[391,666,5],[272,706,10],[323,702,5],[382,693,5],[361,721,11],[395,734,5],[251,743,7],[303,813,10],[340,813,5],[436,800,7],[188,836,7],[212,863,7],[72,841,9],[30,840,7],[56,817,5],[83,861,7],[120,403,5],[35,539,4],[1029,762,6],[1018,740,6],[1037,804,5],[924,915,8],[1001,937,8],[1023,910,5],[959,968,6],[980,990,10],[1009,1063,5],[5,1082,7],[118,1127,5],[152,1127,5],[177,1129,11],[309,1112,11],[423,1120,7],[453,1110,5],[99,1230,6],[106,1292,10],[14,1303,9],[156,1312,6],[125,1320,5],[140,1331,4],[12,1346,5],[126,1430,6],[426,1427,9],[409,1444,6],[478,1424,7],[511,1549,7],[559,1425,9],[540,1446,5],[602,1446,6],[551,1464,7],[615,1477,8],[593,1494,5],[617,1507,7],[573,1464,2],[811,1492,7],[730,1524,6],[967,1472,6],[981,1496,9],[1010,1491,5],[967,1520,6],[653,1563,5],[669,1584,6],[972,1570,7],[994,1585,4],[1036,1608,9],[1040,1194,5],[1021,1215,5],[1035,1241,5],[1055,1342,6],[162,1617,6],[209,1649,7],[220,1667,5],[37,1663,7],[49,1700,5],[80,1705,7],[77,1731,10],[95,1750,6],[49,1757,6],[141,1721,5],[294,1750,8],[287,1778,10],[308,1791,6],[269,1797,6],[272,1818,5],[49,1820,5],[88,1821,7],[324,1867,7],[474,1795,6],[463,1825,9],[439,1835,7],[454,1862,5],[479,1659,5],[632,1653,5],[584,1662,5],[572,1683,7],[544,1808,8],[572,1824,9],[565,1843,5],[582,1857,6],[554,1863,6],[696,1880,9],[850,1883,6],[870,1907,10],[702,1910,6],[764,1915,6],[761,1938,5],[730,1940,6],[741,1963,9],[602,1949,5],[869,1951,5],[855,1979,8],[801,1993,5],[635,2002,5],[686,2018,8],[718,2013,5],[638,2029,6],[660,2028,7],[630,2048,5],[759,2063,4],[598,2011,6],[534,2063,6],[932,2052,5],[955,2051,6],[918,1994,6],[1022,1985,10],[1057,2082,5],[26,2025,8],[5,2162,5],[4,2225,5],[28,2225,5],[276,2224,5],[507,2073,9],[254,2074,5],[1056,2220,5],[1046,1637,4],[947,1626,6],[914,1628,5]];
  const bubbles = document.getElementById('bubbles');
  for (const [x, y, r] of dots) {
    const c = document.createElementNS(NS, 'circle');
    c.setAttribute('cx', x); c.setAttribute('cy', y); c.setAttribute('r', r);
    bubbles.append(c);
  }
  // Repeated doodles: shape, x, y, rotation, scale
  const shapes = [['star',5,427,10,1],['star',326,510,10,1],['star',260,324,10,1],['star',157,382,0,1],['star',612,562,5,1.1],['star',1031,322,15,1],['star',264,852,12,.9],['star',145,833,10,.9],['star',149,1171,0,.8],['star',169,1667,0,1.1],['star',71,2063,15,.8],['star',8,1942,20,.8],['star',964,927,15,.8],
    ['spark',185,623,5,.7],['spark',415,595,5,1],['spark',22,790,0,1],['spark',470,477,0,.7],['spark',458,287,0,.9],['spark',262,390,0,.8],['spark',71,1255,-5,1],['spark',85,1340,-5,.7],['spark',427,1887,-10,.7],['spark',589,1889,0,.65],['spark',1050,1150,0,.9],['spark',932,1587,0,.8],['spark',814,2217,0,.6],['spark',6,560,0,.8],
    ['planet',412,524,-28,1],['planet',652,284,0,.8],['gear',206,288,0,1],['gear',702,1567,0,.95],['gear',7,1248,0,1.3],
    ['heart',359,767,-8,.95],['heart',363,1117,-10,.9],['heart',85,1782,0,1],['heart',353,1634,0,.6],['drop',29,1782,-8,1],['drop',6,1816,0,.9],['drop',802,547,0,.7],['drop',766,587,0,.8],['drop',897,582,0,.6],['drop',28,353,-10,.5],
    ['cam',314,579,-10,.95],['cam',907,1532,-10,.95],['cam',895,2218,-10,.95],['love',815,472,0,1],['love',1020,677,0,.9],['love',642,1837,0,1],['cloud',36,502,0,.9],['cloud',185,577,0,1.1]];
  const repeats = document.getElementById('repeats');
  for (const [id, x, y, angle, size] of shapes) {
    const u = document.createElementNS(NS, 'use');
    u.setAttribute('href', '#' + id);
    u.setAttribute('transform', `translate(${x} ${y}) rotate(${angle}) scale(${size})`);
    repeats.append(u);
  }
</script>
</body>
</html>
